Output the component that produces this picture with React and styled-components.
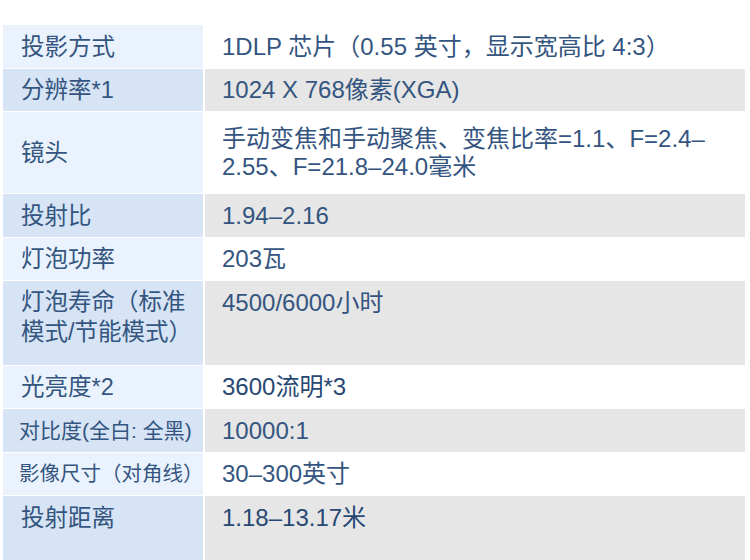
import React from "react";
import styled, { createGlobalStyle } from "styled-components";

const Global = createGlobalStyle`
  html, body { margin: 0; padding: 0; background: #ffffff; }
  body { width: 750px; height: 560px; overflow: hidden; }
`;

const Page = styled.div`
  width: 750px;
  height: 560px;
  padding: 25px 5px 0 3px;
  box-sizing: border-box;
  background: #ffffff;
  font-family: "Liberation Sans", "Noto Sans CJK SC", sans-serif;
  color: #34557f;
`;

const Table = styled.div`
  display: flex;
  flex-direction: column;
  gap: 1px;
`;

const Row = styled.div`
  display: grid;
  grid-template-columns: 200px 1fr;
  column-gap: 2px;
  height: ${(p) => p.$h}px;
`;

const Cell = styled.div`
  display: flex;
  align-items: ${(p) => (p.$top ? "flex-start" : "center")};
  padding-top: ${(p) => (p.$top ? "7px" : "0")};
  box-sizing: border-box;
  line-height: ${(p) => p.$lh || 30}px;
`;

const Label = styled(Cell)`
  background: ${(p) => (p.$alt ? "#d6e4f5" : "#eaf3fd")};
  font-size: ${(p) => p.$fs || 23.5}px;
  padding-left: ${(p) => (p.$fs ? 16 : 18)}px;
  padding-right: 0;
`;

const Value = styled(Cell)`
  background: ${(p) => (p.$alt ? "#e6e6e6" : "#ffffff")};
  font-size: 24px;
  color: ${(p) => (p.$strong ? "#274872" : "#34557f")};
  padding-left: 17px;
  padding-right: 20px;
`;

const rows = [
  { l: "投影方式", v: "1DLP 芯片（0.55 英寸，显示宽高比 4:3）", h: 43 },
  { l: "分辨率*1", v: "1024 X 768像素(XGA)", h: 42 },
  {
    l: "镜头",
    v: "手动变焦和手动聚焦、变焦比率=1.1、F=2.4–2.55、F=21.8–24.0毫米",
    h: 81,
    lh: 28,
  },
  { l: "投射比", v: "1.94–2.16", h: 43 },
  { l: "灯泡功率", v: "203瓦", h: 42 },
  { l: "灯泡寿命（标准模式/节能模式）", v: "4500/6000小时", h: 84, top: true, lh: 29.5 },
  { l: "光亮度*2", v: "3600流明*3", h: 42, strong: true },
  { l: "对比度(全白: 全黑)", v: "10000:1", h: 43, fs: 21 },
  { l: "影像尺寸（对角线）", v: "30–300英寸", h: 42, fs: 20.5 },
  { l: "投射距离", v: "1.18–13.17米", h: 70, top: true, strong: true },
];

export default function App() {
  return (
    <Page>
      <Global />
      <Table>
        {rows.map((r, i) => (
          <Row key={i} $h={r.h}>
            <Label $alt={i % 2 === 1} $top={r.top} $lh={r.lh} $fs={r.fs}>
              <span>{r.l}</span>
            </Label>
            <Value $alt={i % 2 === 1} $top={r.top} $lh={r.lh} $strong={r.strong}>
              <span>{r.v}</span>
            </Value>
          </Row>
        ))}
      </Table>
    </Page>
  );
}
